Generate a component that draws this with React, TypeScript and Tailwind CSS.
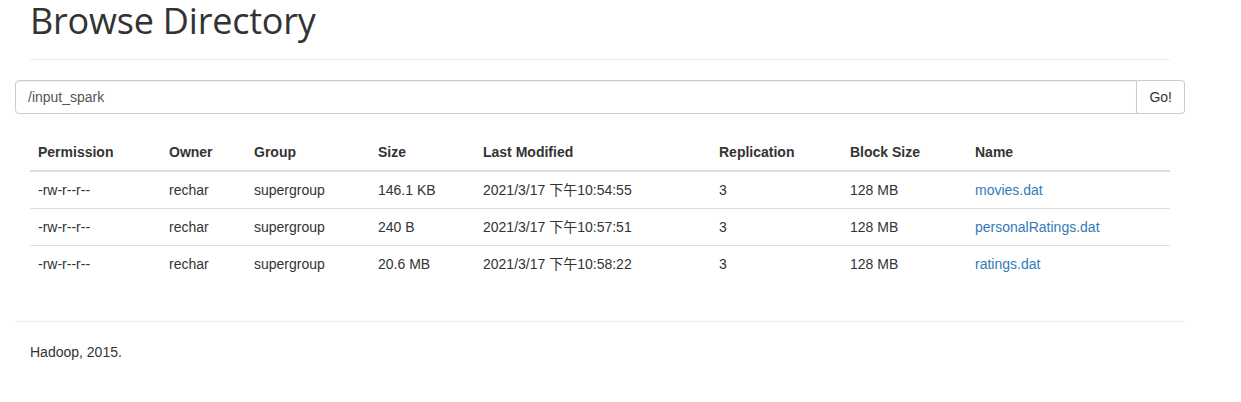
const files = [
  { name: "movies.dat", size: "146.1 KB", modified: "2021/3/17 下午10:54:55" },
  { name: "personalRatings.dat", size: "240 B", modified: "2021/3/17 下午10:57:51" },
  { name: "ratings.dat", size: "20.6 MB", modified: "2021/3/17 下午10:58:22" },
];

const cols = [
  { label: "Permission", w: "w-[131px]" },
  { label: "Owner", w: "w-[85px]" },
  { label: "Group", w: "w-[124px]" },
  { label: "Size", w: "w-[105px]" },
  { label: "Last Modified", w: "w-[236px]" },
  { label: "Replication", w: "w-[131px]" },
  { label: "Block Size", w: "w-[125px]" },
  { label: "Name", w: "" },
];

const App = () => {
  return (
    <div
      className="w-[1200px] bg-white px-[15px] text-[14px] leading-[20px] text-[#333]"
      style={{ fontFamily: '"Liberation Sans", "Noto Sans CJK SC", sans-serif' }}
    >
      <div className="px-[15px]">
        <div className="border-b border-[#eee] pb-[9px] mb-[20px]">
          <h1 className="text-[36px] leading-[42px] font-normal mb-[8px] font-['Open_Sans',sans-serif] tracking-[-0.2px]">
            Browse Directory
          </h1>
        </div>
      </div>

      <div className="flex w-[1170px] h-[34px]">
        <input
          defaultValue="/input_spark"
          className="flex-1 h-full border border-[#ccc] rounded-l-[4px] px-[12px] text-[14px] text-[#555] outline-none shadow-[inset_0_1px_1px_rgba(0,0,0,0.075)]"
        />
        <button className="h-full px-[12px] border border-l-0 border-[#ccc] rounded-r-[4px] bg-white text-[14px] text-[#333]">
          Go!
        </button>
      </div>

      <div className="px-[15px] pt-[20px] pb-[39px]">
        <table className="w-[1140px] border-collapse text-left">
          <thead>
            <tr className="border-b-2 border-[#ddd]">
              {cols.map((c) => (
                <th key={c.label} className={`${c.w} p-[8px] font-bold`}>
                  {c.label}
                </th>
              ))}
            </tr>
          </thead>
          <tbody>
            {files.map((f, i) => (
              <tr key={f.name} className={i < files.length - 1 ? "border-b border-[#ddd]" : ""}>
                <td className="p-[8px]">-rw-r--r--</td>
                <td className="p-[8px]">rechar</td>
                <td className="p-[8px]">supergroup</td>
                <td className="p-[8px]">{f.size}</td>
                <td className="p-[8px]">{f.modified}</td>
                <td className="p-[8px]">3</td>
                <td className="p-[8px]">128 MB</td>
                <td className="p-[8px]">
                  <a href="#" className="text-[#337ab7]">
                    {f.name}
                  </a>
                </td>
              </tr>
            ))}
          </tbody>
        </table>
      </div>

      <div className="w-[1170px] border-t border-[#eee]" />
      <div className="px-[15px] pt-[20px] pb-[40px]">
        <p>Hadoop, 2015.</p>
      </div>
    </div>
  );
};

export default App;
